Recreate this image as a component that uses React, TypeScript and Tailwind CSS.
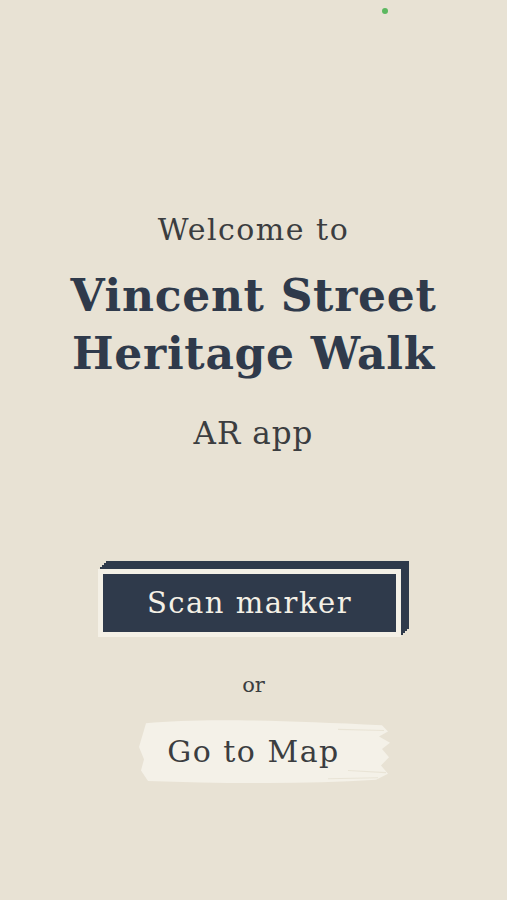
const App = () => {
    return (
        <div className="relative w-full h-[900px] bg-[#e8e2d4] flex flex-col items-center overflow-hidden font-['DejaVu_Serif',serif] text-[#3b3d40]">
            {/* status dot */}
            <div className="absolute top-[8px] left-[382px] w-[6px] h-[6px] rounded-full bg-[#5cb860]" />

            <h2 className="mt-[210px] text-[30px] leading-[40px] tracking-[1.5px]">Welcome to</h2>
            <h1 className="mt-[17px] text-[44px] leading-[58px] font-bold text-[#2f3a4b] text-center tracking-[0.7px]">
                Vincent Street<br />Heritage Walk
            </h1>
            <p className="mt-[30px] text-[31px] leading-[40px] tracking-[1px]">AR app</p>

            <button className="mt-[116px] w-[303px] h-[68px] ml-[-8px] border-[5px] border-[#f4f0e6] bg-[#2f3a4b] shadow-[2px_-2px_0_#2f3a4b,4px_-4px_0_#2f3a4b,6px_-6px_0_#2f3a4b,8px_-8px_0_#2f3a4b] text-[#f4f0e6] text-[29px] tracking-[1.5px] leading-none">
                Scan marker
            </button>

            <p className="mt-[34px] text-[21px] leading-[28px]">or</p>

            <button className="relative mt-[18px] w-[252px] h-[68px] ml-[20px] text-[30px] tracking-[1.5px]">
                <svg className="absolute inset-0 w-full h-full" viewBox="0 0 252 66" preserveAspectRatio="none">
                    <path d="M8 6 C60 1 140 3 244 8 L250 14 L241 19 L252 25 L244 31 L251 39 L243 47 L250 55 L238 61 C160 66 80 64 10 62 L3 52 L6 41 L1 29 L5 16 Z" fill="#f4f1e8" />
                    <path d="M200 12 L246 13 M210 52 L248 54 M190 60 L240 59" stroke="#e9e4d6" strokeWidth="1" />
                </svg>
                <span className="relative -ml-[20px]">Go to Map</span>
            </button>
        </div>
    );
};

export default App;
